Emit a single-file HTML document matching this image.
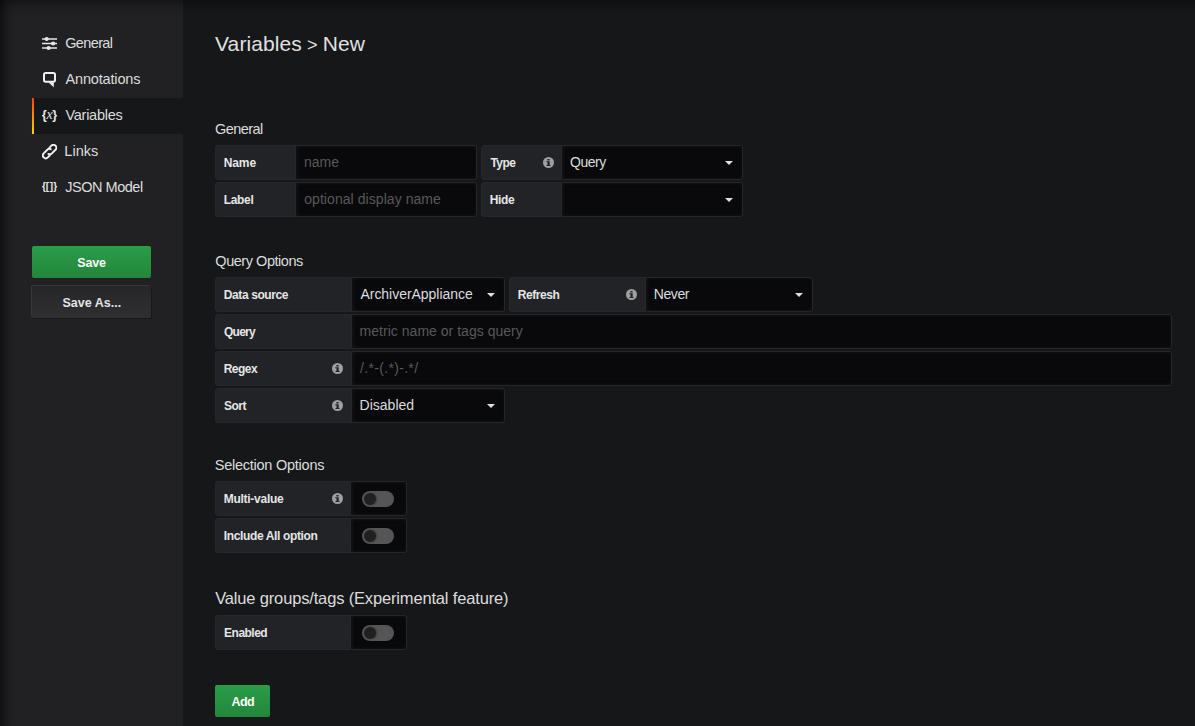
<!DOCTYPE html>
<html lang="en">
<head>
<meta charset="utf-8">
<title>Variables &gt; New</title>
<style>
*{box-sizing:border-box;margin:0;padding:0}
html,body{width:1195px;height:726px;overflow:hidden;background:#161719}
body{position:relative;font-family:"Liberation Sans",Arial,sans-serif;font-size:13px;color:#d8d9da}
.t{white-space:nowrap;display:inline-block}
.aside{position:absolute;left:0;top:0;width:183px;height:726px;background:#212124}
.nav{position:absolute;left:32px;top:26px;width:151px}
.nav a{display:flex;align-items:center;height:36px;padding-left:10px;font-size:14.5px;color:#dcdddd;text-decoration:none;position:relative}
.nav a svg{width:15px;height:16px;margin-right:8px;flex:none}
.nav a.active{background:#161719}
.nav a.active:before{content:"";position:absolute;left:0;top:0;bottom:0;width:2px;background:linear-gradient(#ff4400,#ffd500)}
.btn{position:absolute;display:flex;align-items:center;justify-content:center;font-weight:bold;font-size:12.500px;color:#fff;border-radius:2px}
.btn.green{background:linear-gradient(#2a9d47,#23863c)}
.btn.inv{background:linear-gradient(#262628,#2f2f32);color:#e3e3e3;box-shadow:-1px -1px 0 0 rgba(255,255,255,.1),1px 1px 0 0 rgba(0,0,0,.3)}
.main{position:absolute;left:215px;top:0;right:23px}
h3{position:absolute;left:0;top:31px;font-size:21px;font-weight:normal;line-height:24px;color:#e0e0e0}
h5{position:absolute;left:0;font-size:14.500px;font-weight:normal;line-height:18px;color:#dcdddd}
h5.big{font-size:16.500px;line-height:20px}
#title_gt{font-size:18px}
.row{position:absolute;left:0;height:35px;display:flex}
.lbl{height:35px;background:#212327;border:1px solid #25272b;display:flex;align-items:center;padding-left:9px;font-size:12px;font-weight:bold;color:#e6e6e6;position:relative;flex:none;border-radius:3px 0 0 3px}
.inp{height:35px;background:#09090b;border:1px solid #262628;border-left:0;display:flex;align-items:center;padding-left:8px;font-size:14px;color:#dcdddd;position:relative;flex:none;box-shadow:inset 1px 0 4px 0 rgba(150,150,150,.1);border-radius:0 3px 3px 0}
.inp.ph{color:#58585a}
.gap{width:4px;flex:none}
.caret{position:absolute;right:9px;top:15px;width:0;height:0;border-left:4px solid transparent;border-right:4px solid transparent;border-top:4.500px solid #e0e0e0}
.info{position:absolute;top:11px;width:11px;height:11px}
.sw{width:32px;height:16px;border-radius:8px;background:#555;position:relative;margin-left:3px}
.sw:before{content:"";position:absolute;left:2px;top:2px;width:12px;height:12px;border-radius:50%;background:#202021;box-shadow:1px 0 2px rgba(0,0,0,.35)}
.shade-l{position:absolute;left:0;top:0;width:20px;height:726px;background:linear-gradient(90deg,rgba(0,0,0,.5) 0,rgba(0,0,0,.37) 3px,rgba(0,0,0,.23) 6px,rgba(0,0,0,.1) 10px,rgba(0,0,0,.03) 14px,rgba(0,0,0,0) 18px);pointer-events:none}
.shade-t{position:absolute;left:0;top:0;width:1195px;height:20px;background:linear-gradient(rgba(0,0,0,.34) 0,rgba(0,0,0,.25) 3px,rgba(0,0,0,.16) 6px,rgba(0,0,0,.07) 10px,rgba(0,0,0,.02) 14px,rgba(0,0,0,0) 18px);pointer-events:none}
</style>
</head>
<body>
<div class="aside">
  <nav class="nav">
    <a><svg viewBox="0 0 15 16"><path d="M0 3h15M0 7.500h15M0 12h15" fill="none" stroke="#e6e6e6" stroke-width="1.500"/><g fill="#e6e6e6"><circle cx="4.700" cy="3" r="2.100"/><circle cx="11.100" cy="7.500" r="2.100"/><circle cx="6.600" cy="12" r="2.100"/></g></svg><span class="t" id="nav_general" style="letter-spacing:-0.621px;position:relative;left:0.17px;top:-1.00px">General</span></a>
    <a><svg viewBox="0 0 15 16"><rect x="2" y="1" width="11" height="8.700" rx="1.600" fill="none" stroke="#f0f0f0" stroke-width="2"/><path d="M6.300 10.200l5.500 5v-5z" fill="#f0f0f0"/></svg><span class="t" id="nav_annotations" style="letter-spacing:-0.164px;position:relative;left:0.54px;top:-1.00px">Annotations</span></a>
    <a class="active"><svg viewBox="0 0 15 16"><g font-family="Liberation Sans, sans-serif" font-weight="bold" font-size="13" fill="#e6e6e6"><text x="-0.300" y="10.760">{</text><text x="15.300" y="10.760" text-anchor="end">}</text></g><text x="7.600" y="10.700" text-anchor="middle" font-family="Liberation Serif, serif" font-style="italic" font-size="14" fill="#e0e0e0">x</text></svg><span class="t" id="nav_variables" style="letter-spacing:-0.260px;position:relative;left:0.45px;top:-1.00px">Variables</span></a>
    <a><svg viewBox="0 0 15 16"><g transform="translate(7.600 7.550) rotate(-45)" fill="none" stroke="#f0f0f0" stroke-width="1.900" stroke-linecap="round"><path d="M-2.500 0.800A2.900 2.900 0 0 0 0.400 2.900H5.400A2.900 2.900 0 0 0 5.400 -2.900H2.700"/><path d="M2.500 -0.800A2.900 2.900 0 0 0 -0.400 -2.900H-5.400A2.900 2.900 0 0 0 -5.400 2.900H-2.700"/></g></svg><span class="t" id="nav_links" style="letter-spacing:0.052px;position:relative;left:-0.73px;top:-1.00px">Links</span></a>
    <a><svg viewBox="0 0 15 16"><g font-family="Liberation Sans, sans-serif" font-weight="bold" font-size="11.600" fill="#e6e6e6"><text x="-0.100" y="10.200" textLength="7.300" lengthAdjust="spacingAndGlyphs">{[</text><text x="7.800" y="10.200" textLength="7.300" lengthAdjust="spacingAndGlyphs">]}</text></g></svg><span class="t" id="nav_json" style="letter-spacing:-0.464px;position:relative;left:0.17px;top:-1.00px">JSON Model</span></a>
  </nav>
  <div class="btn green" style="left:32px;top:246px;width:119px;height:32px"><span class="t" id="btn_save" style="letter-spacing:-0.211px;position:relative;left:0.02px;top:1.00px">Save</span></div>
  <div class="btn inv" style="left:32px;top:286px;width:119px;height:32px"><span class="t" id="btn_saveas" style="letter-spacing:0.008px;position:relative;left:0.31px;top:1.00px">Save As...</span></div>
</div>
<div class="main">
  <h3><span class="t" id="title" style="letter-spacing:0.103px;position:relative;left:0.05px;top:1.00px">Variables</span> <span class="t" id="title_gt" style="position:relative;left:-0.70px;top:1.00px">&gt;</span> <span class="t" id="title_new" style="letter-spacing:0.056px;position:relative;left:-1.41px;top:1.00px">New</span></h3>

  <h5 style="top:120px"><span class="t" id="h_general" style="letter-spacing:-0.593px;position:relative;left:0.12px;top:0.00px">General</span></h5>
  <div class="row" style="top:145px">
    <div class="lbl" style="width:81px"><span class="t" id="l_name" style="letter-spacing:-0.110px;position:relative;left:-1.29px;top:0.50px">Name</span></div><div class="inp ph" style="width:181px"><span class="t" id="p_name" style="letter-spacing:0.041px;position:relative;left:-0.11px;top:-0.50px">name</span></div>
    <div class="gap"></div>
    <div class="lbl" style="width:81px"><span class="t" id="l_type" style="letter-spacing:-0.531px;position:relative;left:-0.58px;top:0.50px">Type</span><svg class="info" style="left:60.500px" viewBox="0 0 12 12"><circle cx="6" cy="6" r="6" fill="#a0a0a0"/><path d="M4.800 2.200h2.400v1.600h-2.400zM3.600 4.600h3.700v4h.9v1.100h-4.400v-1.100h1.100v-2.900h-1.300z" fill="#212327"/></svg></div><div class="inp" style="width:181px"><span class="t" id="v_query" style="letter-spacing:-0.456px;position:relative;left:-0.01px;top:-0.50px">Query</span><i class="caret"></i></div>
  </div>
  <div class="row" style="top:182px">
    <div class="lbl" style="width:81px"><span class="t" id="l_label" style="letter-spacing:-0.322px;position:relative;left:-1.29px;top:0.50px">Label</span></div><div class="inp ph" style="width:181px"><span class="t" id="p_label" style="letter-spacing:0.062px;position:relative;left:0.22px;top:-0.50px">optional display name</span></div>
    <div class="gap"></div>
    <div class="lbl" style="width:81px"><span class="t" id="l_hide" style="letter-spacing:-0.321px;position:relative;left:-1.25px;top:0.50px">Hide</span></div><div class="inp" style="width:181px"><i class="caret"></i></div>
  </div>

  <h5 style="top:252px"><span class="t" id="h_query" style="letter-spacing:-0.465px;position:relative;left:0.37px;top:0.00px">Query Options</span></h5>
  <div class="row" style="top:277px">
    <div class="lbl" style="width:137px"><span class="t" id="l_ds" style="letter-spacing:-0.392px;position:relative;left:-1.25px;top:0.50px">Data source</span></div><div class="inp" style="width:153px"><span class="t" id="v_arch" style="letter-spacing:-0.033px;position:relative;left:0.47px;top:-0.50px">ArchiverAppliance</span><i class="caret"></i></div>
    <div class="gap"></div>
    <div class="lbl" style="width:137px"><span class="t" id="l_refresh" style="letter-spacing:-0.430px;position:relative;left:-1.29px;top:0.50px">Refresh</span><svg class="info" style="left:116.300px" viewBox="0 0 12 12"><circle cx="6" cy="6" r="6" fill="#a0a0a0"/><path d="M4.800 2.200h2.400v1.600h-2.400zM3.600 4.600h3.700v4h.9v1.100h-4.400v-1.100h1.100v-2.900h-1.300z" fill="#212327"/></svg></div><div class="inp" style="width:167px"><span class="t" id="v_never" style="letter-spacing:-0.374px;position:relative;left:-0.34px;top:-0.50px">Never</span><i class="caret"></i></div>
  </div>
  <div class="row" style="top:314px;right:0">
    <div class="lbl" style="width:137px"><span class="t" id="l_query" style="letter-spacing:-0.766px;position:relative;left:-0.96px;top:0.50px">Query</span></div><div class="inp ph" style="flex:1"><span class="t" id="p_metric" style="letter-spacing:0.024px;position:relative;left:-0.41px;top:-0.50px">metric name or tags query</span></div>
  </div>
  <div class="row" style="top:351px;right:0">
    <div class="lbl" style="width:137px"><span class="t" id="l_regex" style="letter-spacing:-0.548px;position:relative;left:-1.25px;top:0.50px">Regex</span><svg class="info" style="left:116.300px" viewBox="0 0 12 12"><circle cx="6" cy="6" r="6" fill="#a0a0a0"/><path d="M4.800 2.200h2.400v1.600h-2.400zM3.600 4.600h3.700v4h.9v1.100h-4.400v-1.100h1.100v-2.900h-1.300z" fill="#212327"/></svg></div><div class="inp ph" style="flex:1"><span class="t" id="p_regex" style="letter-spacing:0.326px;position:relative;left:-0.01px;top:-0.50px">/.*-(.*)-.*/</span></div>
  </div>
  <div class="row" style="top:388px">
    <div class="lbl" style="width:137px"><span class="t" id="l_sort" style="letter-spacing:-0.444px;position:relative;left:-1.11px;top:0.50px">Sort</span><svg class="info" style="left:116.300px" viewBox="0 0 12 12"><circle cx="6" cy="6" r="6" fill="#a0a0a0"/><path d="M4.800 2.200h2.400v1.600h-2.400zM3.600 4.600h3.700v4h.9v1.100h-4.400v-1.100h1.100v-2.900h-1.300z" fill="#212327"/></svg></div><div class="inp" style="width:153px"><span class="t" id="v_disabled" style="letter-spacing:0.008px;position:relative;left:-0.45px;top:-0.50px">Disabled</span><i class="caret"></i></div>
  </div>

  <h5 style="top:456px"><span class="t" id="h_sel" style="letter-spacing:-0.249px;position:relative;left:-0.22px;top:0.00px">Selection Options</span></h5>
  <div class="row" style="top:481px">
    <div class="lbl" style="width:136px"><span class="t" id="l_multi" style="letter-spacing:-0.274px;position:relative;left:-1.25px;top:0.50px">Multi-value</span><svg class="info" style="left:116.300px" viewBox="0 0 12 12"><circle cx="6" cy="6" r="6" fill="#a0a0a0"/><path d="M4.800 2.200h2.400v1.600h-2.400zM3.600 4.600h3.700v4h.9v1.100h-4.400v-1.100h1.100v-2.900h-1.300z" fill="#212327"/></svg></div><div class="inp" style="width:56px"><span class="sw"></span></div>
  </div>
  <div class="row" style="top:518px">
    <div class="lbl" style="width:136px"><span class="t" id="l_incl" style="letter-spacing:-0.363px;position:relative;left:-1.25px;top:0.50px">Include All option</span></div><div class="inp" style="width:56px"><span class="sw"></span></div>
  </div>

  <h5 class="big" style="top:588px"><span class="t" id="h_val" style="letter-spacing:-0.159px;position:relative;left:0.16px;top:0.00px">Value groups/tags (Experimental feature)</span></h5>
  <div class="row" style="top:615px">
    <div class="lbl" style="width:136px"><span class="t" id="l_enabled" style="letter-spacing:-0.516px;position:relative;left:-0.91px;top:0.50px">Enabled</span></div><div class="inp" style="width:56px"><span class="sw"></span></div>
  </div>
  <div class="btn green" style="left:0;top:685px;width:55px;height:32px"><span class="t" id="btn_add" style="letter-spacing:-0.534px;position:relative;left:0.35px;top:1.00px">Add</span></div>
</div>
<div class="shade-l"></div>
<div class="shade-t"></div>
</body>
</html>
